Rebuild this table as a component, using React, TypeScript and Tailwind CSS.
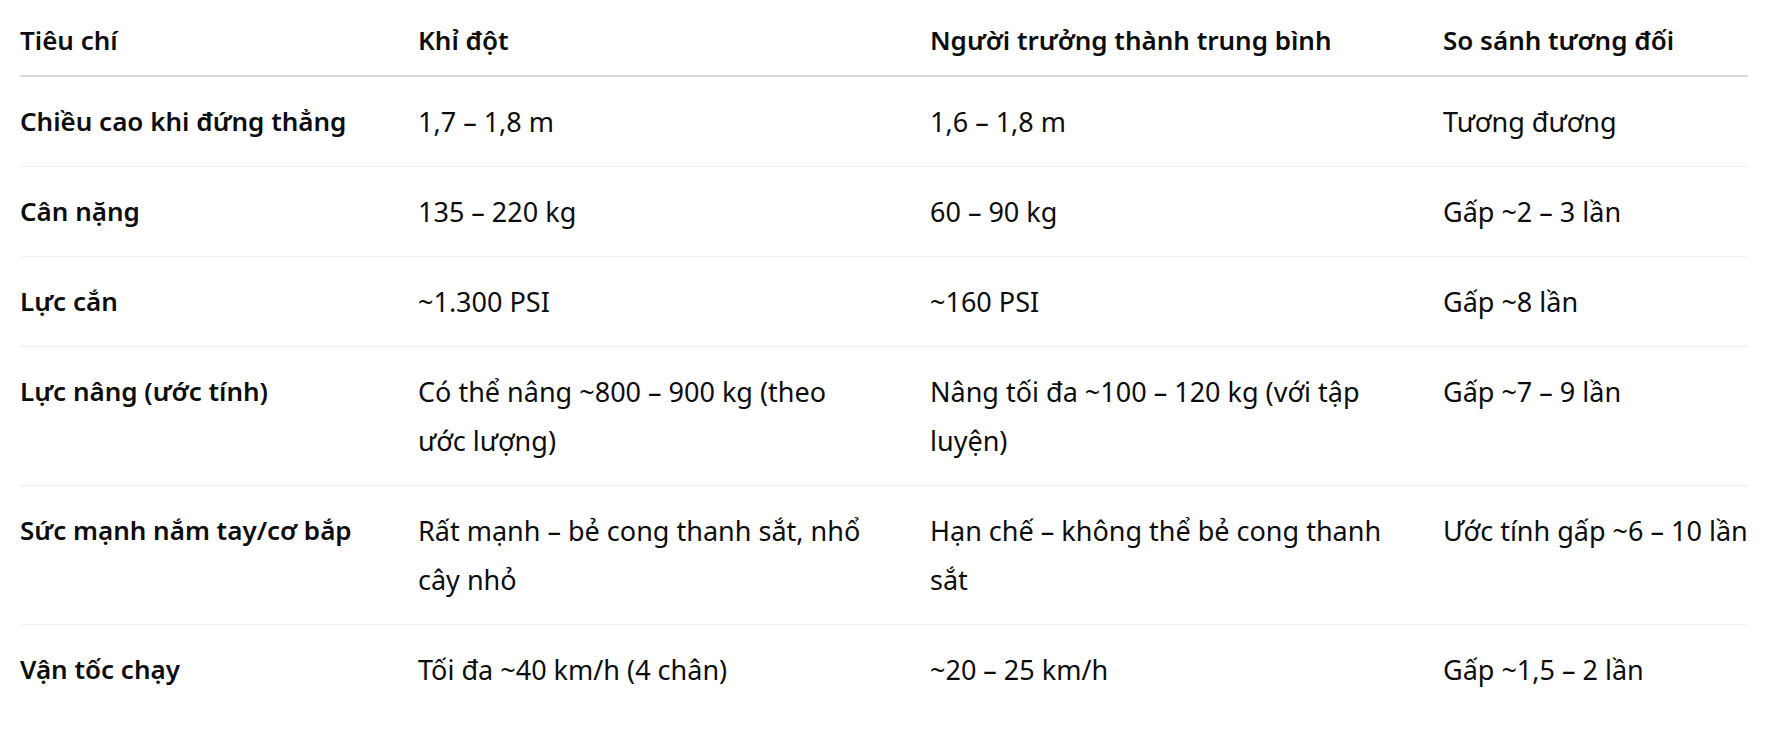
const head = ["Tiêu chí", "Khỉ đột", "Người trưởng thành trung bình", "So sánh tương đối"];

const rows = [
  ["Chiều cao khi đứng thẳng", "1,7 – 1,8 m", "1,6 – 1,8 m", "Tương đương"],
  ["Cân nặng", "135 – 220 kg", "60 – 90 kg", "Gấp ~2 – 3 lần"],
  ["Lực cắn", "~1.300 PSI", "~160 PSI", "Gấp ~8 lần"],
  [
    "Lực nâng (ước tính)",
    "Có thể nâng ~800 – 900 kg (theo ước lượng)",
    "Nâng tối đa ~100 – 120 kg (với tập luyện)",
    "Gấp ~7 – 9 lần",
  ],
  [
    "Sức mạnh nắm tay/cơ bắp",
    "Rất mạnh – bẻ cong thanh sắt, nhổ cây nhỏ",
    "Hạn chế – không thể bẻ cong thanh sắt",
    "Ước tính gấp ~6 – 10 lần",
  ],
  ["Vận tốc chạy", "Tối đa ~40 km/h (4 chân)", "~20 – 25 km/h", "Gấp ~1,5 – 2 lần"],
];

export default function App() {
  return (
    <div className="min-h-[738px] w-[1786px] bg-white font-['Noto_Sans',sans-serif] text-[27px] text-[#0d0d0d]">
      <table className="ml-[20px] w-[1728px] table-fixed border-collapse">
        <colgroup>
          <col className="w-[398px]" />
          <col className="w-[512px]" />
          <col className="w-[513px]" />
          <col className="w-[305px]" />
        </colgroup>
        <thead>
          <tr className="border-b-2 border-[#d9d9d9]">
            {head.map((h, i) => (
              <th
                key={h}
                className={`pt-[16px] pb-[10px] text-left align-top text-[26px] font-semibold leading-[49px] ${
                  i < 3 ? "pr-[56px]" : "whitespace-nowrap"
                }`}
              >
                {h}
              </th>
            ))}
          </tr>
        </thead>
        <tbody>
          {rows.map((r, ri) => (
            <tr
              key={r[0]}
              className={ri < rows.length - 1 ? "border-b border-[#f0f0f0]" : ""}
            >
              {r.map((c, i) => (
                <td
                  key={i}
                  className={`py-[20px] align-top leading-[49px] ${
                    i === 0 ? "text-[26px] font-semibold" : ""
                  } ${i < 3 ? "pr-[56px]" : "whitespace-nowrap"}`}
                >
                  {c}
                </td>
              ))}
            </tr>
          ))}
        </tbody>
      </table>
    </div>
  );
}
